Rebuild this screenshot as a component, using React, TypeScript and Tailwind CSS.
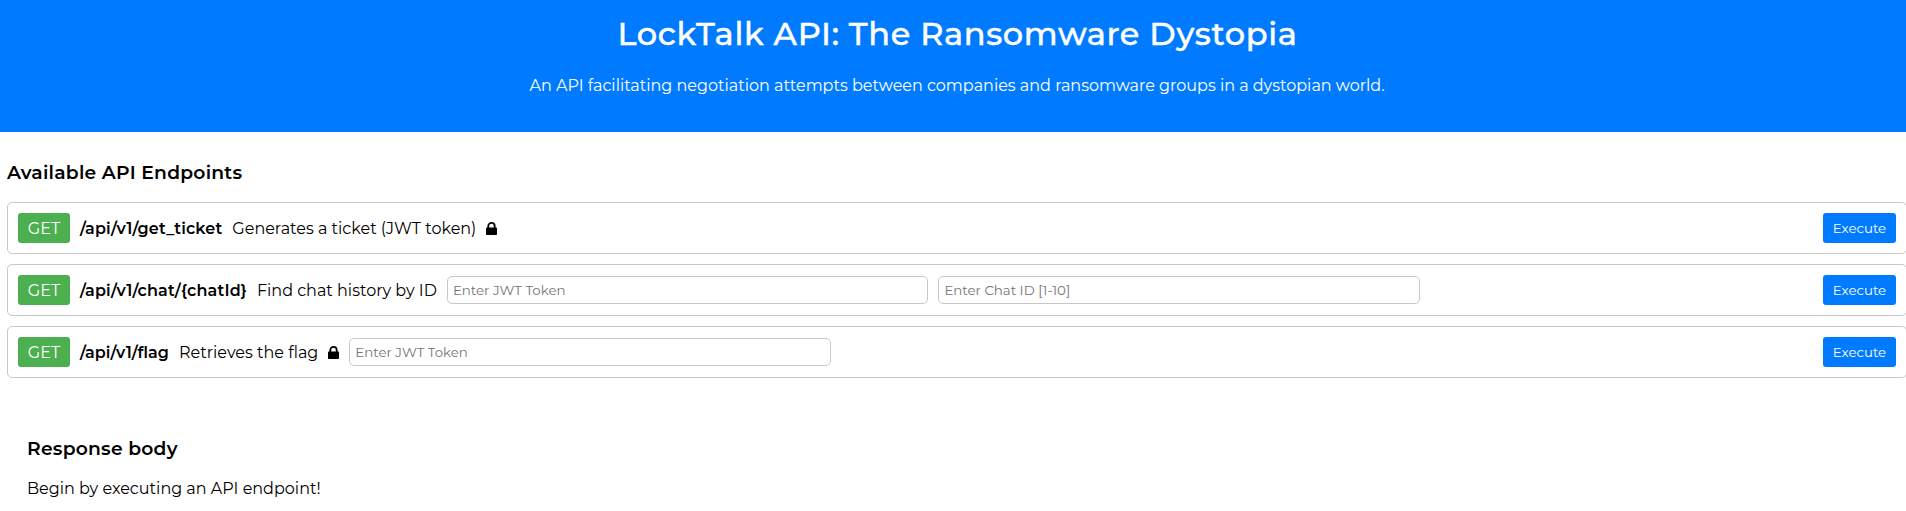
type Endpoint = {
  path: string;
  pathClass: string;
  description: string;
  locked?: boolean;
  inputs: string[];
};

const endpoints: Endpoint[] = [
  {
    path: "/api/v1/get_ticket",
    pathClass: "tracking-[0.17px]",
    description: "Generates a ticket (JWT token)",
    locked: true,
    inputs: [],
  },
  {
    path: "/api/v1/chat/{chatId}",
    pathClass: "tracking-[0.17px]",
    description: "Find chat history by ID",
    inputs: ["Enter JWT Token", "Enter Chat ID [1-10]"],
  },
  {
    path: "/api/v1/flag",
    pathClass: "tracking-[0.08px]",
    description: "Retrieves the flag",
    locked: true,
    inputs: ["Enter JWT Token"],
  },
];

function LockIcon() {
  return (
    <svg className="h-[13px] w-[11px] shrink-0" viewBox="0 0 11 13" aria-hidden="true">
      <rect x="0" y="5.5" width="11" height="7.5" rx="0.8" fill="black" />
      <path d="M2.3 6.5V4.1a3.2 3.2 0 0 1 6.4 0v2.4" fill="none" stroke="black" strokeWidth="1.8" />
    </svg>
  );
}

function EndpointRow({ path, pathClass, description, locked, inputs }: Endpoint) {
  return (
    <div className="flex h-[52px] items-center gap-2.5 rounded-[5px] border border-[#c8c8c8] px-2.5">
      <span className="flex h-[30px] w-[52px] items-center justify-center rounded-[3px] bg-[#4caf50] pt-px text-white">
        GET
      </span>
      <span className={`pt-0.5 font-semibold [font-feature-settings:'liga'_1] ${pathClass}`}>{path}</span>
      <span className="pt-0.5">{description}</span>
      {locked && <LockIcon />}
      {inputs.map((placeholder) => (
        <input
          key={placeholder}
          type="text"
          placeholder={placeholder}
          className="h-7 w-[481.5px] rounded-[5px] border border-[#c8c8c8] px-[5px] text-[13.333px] placeholder:text-[#757575]"
        />
      ))}
      <button className="ml-auto h-[30px] w-[73px] rounded-[3px] bg-[#007bff] text-[13.333px] text-white">
        Execute
      </button>
    </div>
  );
}

export default function App() {
  return (
    <div className="min-h-screen overflow-hidden bg-white font-['Montserrat',sans-serif] text-base leading-5 text-black">
      <header className="h-[132px] bg-[#007bff] pt-[14px] pl-2 text-center text-white">
        <h1 className="pl-px text-[32px] leading-[39px] font-medium tracking-[0.65px] [-webkit-text-stroke:0.4px_white]">
          LockTalk API: The Ransomware Dystopia
        </h1>
        <p className="mt-[23px]">
          An API facilitating negotiation attempts between companies and ransomware groups in a dystopian world.
        </p>
      </header>
      <main className="-mr-px pl-[7px]">
        <h3 className="pt-[29px] text-[18.72px] leading-6 font-semibold tracking-[0.24px]">Available API Endpoints</h3>
        <div className="mt-[17px] flex flex-col gap-2.5">
          {endpoints.map((endpoint) => (
            <EndpointRow key={endpoint.path} {...endpoint} />
          ))}
        </div>
        <section className="pt-[59px] pl-5">
          <h3 className="text-[18.72px] leading-6 font-semibold tracking-[0.24px]">Response body</h3>
          <p className="mt-[18px]">Begin by executing an API endpoint!</p>
        </section>
      </main>
    </div>
  );
}
